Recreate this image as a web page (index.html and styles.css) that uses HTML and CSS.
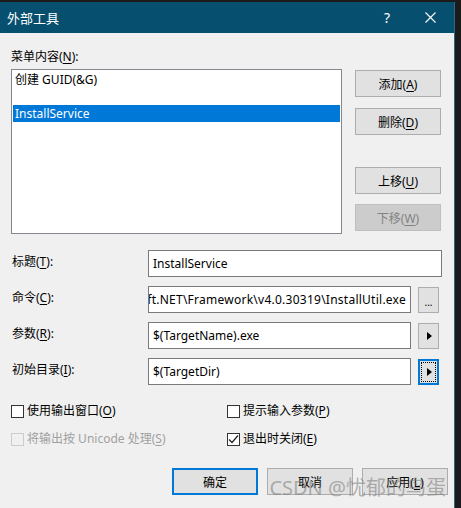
FILE: index.html
```html
<!DOCTYPE html>
<html lang="zh-CN">

<head>
    <meta charset="UTF-8">
    <title>外部工具</title>
    <link rel="stylesheet" href="styles.css">
</head>

<body>

    <div class="window">
        <!-- title bar -->
        <div class="titlebar">
            <span class="title">外部工具</span>
            <span class="help">?</span>
            <svg class="close" width="11" height="11" viewBox="0 0 11 11">
                <path d="M0.5 0.5 L10.5 10.5 M10.5 0.5 L0.5 10.5" stroke="#fff" stroke-width="1.1" fill="none" />
            </svg>
        </div>

        <div class="content">
            <div class="list-label">菜单内容(<u>N</u>):</div>

            <div class="menu-row">
                <div class="listbox">
                    <div class="item">创建 GUID(&amp;G)</div>
                    <div class="item"></div>
                    <div class="item selected">InstallService</div>
                </div>
                <div class="side-buttons">
                    <button class="btn add">添加(<u>A</u>)</button>
                    <button class="btn del">删除(<u>D</u>)</button>
                    <button class="btn up">上移(<u>U</u>)</button>
                    <button class="btn down" disabled>下移(<u>W</u>)</button>
                </div>
            </div>

            <div class="fields">
                <label class="field-label">标题(<u>T</u>):</label>
                <div class="field wide">InstallService</div>

                <label class="field-label">命令(<u>C</u>):</label>
                <div class="field-line">
                    <div class="field clip"><span>C:\Windows\Microsoft.NET\Framework\v4.0.30319\InstallUtil.exe</span></div>
                    <button class="mini dots">...</button>
                </div>

                <label class="field-label">参数(<u>R</u>):</label>
                <div class="field-line">
                    <div class="field">$(TargetName).exe</div>
                    <button class="mini"><span class="arrow"></span></button>
                </div>

                <label class="field-label">初始目录(<u>I</u>):</label>
                <div class="field-line">
                    <div class="field">$(TargetDir)</div>
                    <button class="mini focused"><span class="focus-ring"><span class="arrow"></span></span></button>
                </div>
            </div>

            <div class="checks">
                <div class="check"><span class="box"></span><span>使用输出窗口(<u>O</u>)</span></div>
                <div class="check"><span class="box"></span><span>提示输入参数(<u>P</u>)</span></div>
                <div class="check disabled"><span class="box"></span><span>将输出按 Unicode 处理(<u>S</u>)</span></div>
                <div class="check"><span class="box">
                        <svg width="11" height="11" viewBox="0 0 11 11">
                            <path d="M1 5.5 L4 8.5 L10 1.5" stroke="#222" stroke-width="1.2" fill="none" />
                        </svg>
                    </span><span>退出时关闭(<u>E</u>)</span></div>
            </div>

            <div class="footer">
                <button class="btn primary">确定</button>
                <button class="btn">取消</button>
                <button class="btn">应用(<u>L</u>)</button>
            </div>
        </div>

        <div class="watermark">CSDN @忧郁的鸟蛋</div>
    </div>

</body>

</html>
```

FILE: styles.css
```css
* {
    box-sizing: border-box;
}

body {
    margin: 0;
    background: #1b1b1b;
    font-family: 'Noto Sans', 'Noto Sans CJK SC', sans-serif;
    font-size: 12px;
    color: #000;
}

u {
    text-decoration-thickness: 1px;
    text-underline-offset: 2px;
}

.window {
    position: relative;
    width: 455px;
    height: 506px;
    margin-top: 2px;
    background: #f0f0f0;
    border-right: 1px solid #2f6682;
}

.titlebar {
    height: 31px;
    background: #074f6f;
    color: #fff;
    display: flex;
    align-items: center;
    padding-left: 7px;
}

.title {
    font-size: 13px;
    flex: 1;
}

.help {
    font-size: 14px;
    margin-right: 35px;
}

.close {
    margin-right: 18px;
}

.content {
    padding-left: 11px;
}

.list-label {
    line-height: 16px;
    margin-top: 16px;
}

.menu-row {
    display: flex;
    gap: 13px;
    margin-top: 4px;
    height: 165px;
}

.listbox {
    width: 331px;
    height: 165px;
    background: #fff;
    border: 1px solid #828790;
    padding: 1px 1px 0;
}

.item {
    height: 17px;
    line-height: 17px;
    padding-left: 2px;
}

.item.selected {
    background: #0078d7;
    color: #fff;
}

.side-buttons {
    display: flex;
    flex-direction: column;
    padding-top: 1px;
}

.btn {
    width: 86px;
    height: 27px;
    background: #e1e1e1;
    border: 1px solid #adadad;
    font-family: inherit;
    font-size: 12px;
    color: #000;
    padding: 0;
}

.side-buttons .del {
    margin-top: 11px;
}

.side-buttons .up {
    margin-top: 32px;
}

.side-buttons .down {
    margin-top: 10px;
}

.btn:disabled {
    background: #cccccc;
    border-color: #bfbfbf;
    color: #838383;
}

.fields {
    display: grid;
    grid-template-columns: 137px 294px;
    grid-auto-rows: 27px;
    row-gap: 9px;
    margin-top: 16px;
    align-items: center;
}

.field-label {
    padding-left: 1px;
    margin-top: -6px;
}

.field {
    height: 27px;
    background: #fff;
    border: 1px solid #7a7a7a;
    line-height: 25px;
    padding-left: 4px;
    white-space: nowrap;
}

.field-line {
    display: flex;
    gap: 7px;
    align-items: center;
}

.field-line .field {
    width: 263px;
}

.field.clip {
    overflow: hidden;
    display: flex;
    justify-content: flex-end;
    padding-right: 4px;
    letter-spacing: 0.25px;
}

.mini {
    width: 21px;
    height: 26px;
    background: #e1e1e1;
    border: 1px solid #adadad;
    padding: 0;
    display: flex;
    align-items: center;
    justify-content: center;
    font-family: inherit;
    font-size: 10px;
}

.mini.dots {
    padding-top: 4px;
}

.arrow {
    display: block;
    width: 0;
    height: 0;
    border-top: 4px solid transparent;
    border-bottom: 4px solid transparent;
    border-left: 5px solid #000;
    margin-left: 2px;
}

.mini.focused {
    border: 2px solid #0078d7;
    margin-top: 1px;
}

.focus-ring {
    width: 15px;
    height: 20px;
    border: 1px dotted #000;
    display: flex;
    align-items: center;
    justify-content: center;
}

.checks {
    display: grid;
    grid-template-columns: 216px 200px;
    row-gap: 12px;
    margin-top: 18px;
}

.check {
    display: flex;
    align-items: center;
    gap: 3px;
    line-height: 16px;
}

.box {
    width: 13px;
    height: 13px;
    border: 1px solid #333;
    background: #fff;
    display: flex;
    align-items: center;
    justify-content: center;
}

.check.disabled {
    color: #a0a0a0;
}

.check.disabled .box {
    border-color: #cccccc;
    background: #f0f0f0;
}

.footer {
    display: flex;
    gap: 9px;
    margin-top: 21px;
    padding-left: 161px;
}

.footer .btn {
    height: 27px;
}

.btn.primary {
    border: 2px solid #0078d7;
}

.watermark {
    position: absolute;
    right: 8px;
    bottom: 7px;
    font-size: 20px;
    color: rgba(120, 120, 120, 0.55);
}
```
